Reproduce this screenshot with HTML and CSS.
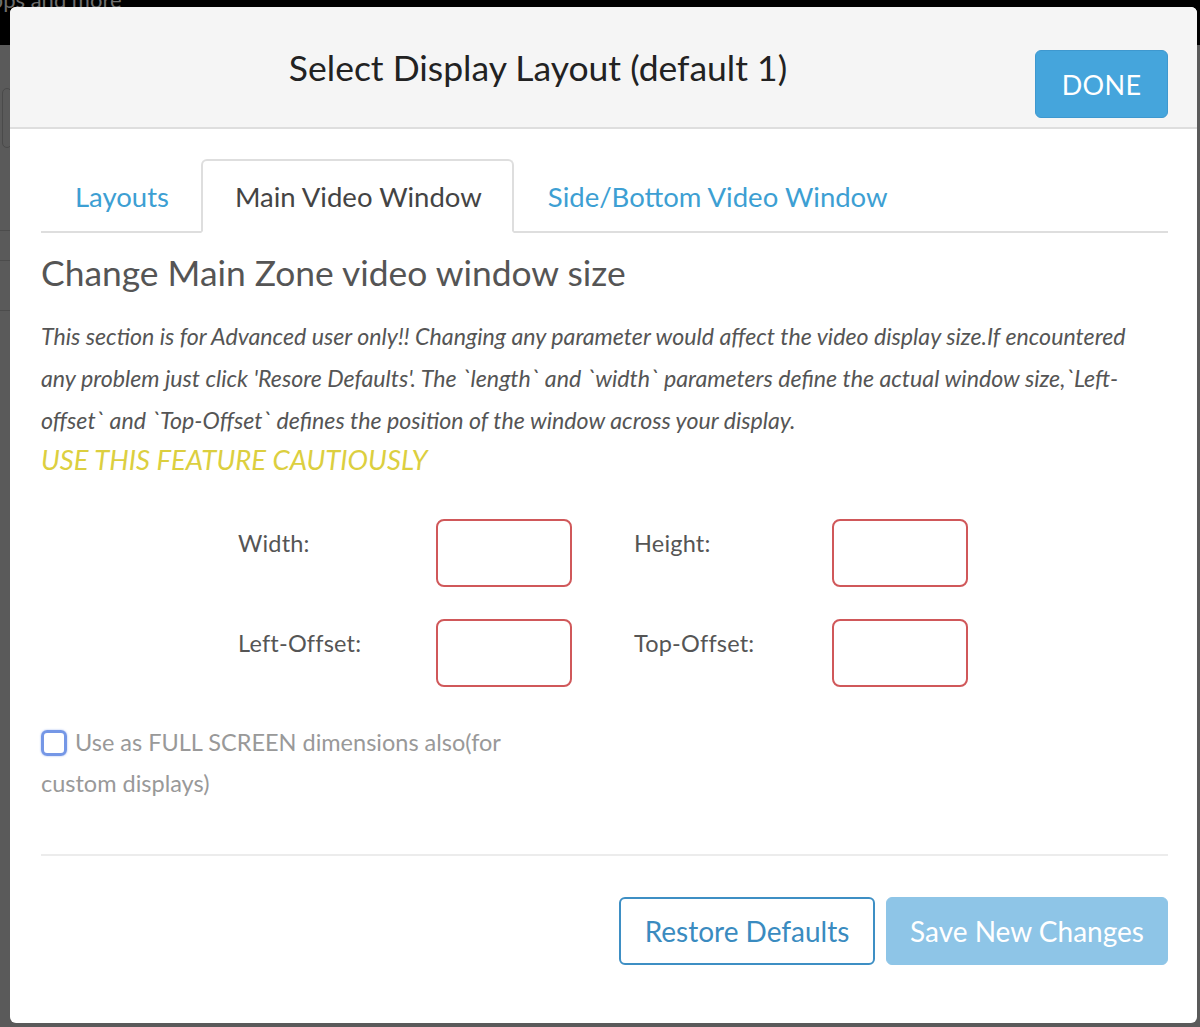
FILE: index.html
```html
<!DOCTYPE html>
<html lang="en">
<head>
<meta charset="utf-8">
<title>Select Display Layout</title>
<link rel="stylesheet" href="styles.css">
</head>
<body>
  <div class="page">
    <div class="page-top"><span class="page-tagline">Apps and more</span></div>
    <div class="page-body">
      <div class="ghost-pill"></div>
      <div class="ghost-line l1"></div>
      <div class="ghost-line l2"></div>
      <div class="ghost-line l3"></div>
    </div>
  </div>

  <div class="modal">
    <div class="modal-header">
      <h2 class="modal-title">Select Display Layout (default 1)</h2>
      <button class="btn btn-done" type="button">DONE</button>
    </div>

    <div class="modal-body">
      <ul class="tabs">
        <li class="tab"><a href="#">Layouts</a></li>
        <li class="tab active"><a href="#">Main Video Window</a></li>
        <li class="tab"><a href="#">Side/Bottom Video Window</a></li>
      </ul>

      <h3 class="section-title">Change Main Zone video window size</h3>
      <p class="notice">This section is for Advanced user only!! Changing any parameter would affect the video display size.If encountered any problem just click 'Resore Defaults'. The `length` and `width` parameters define the actual window size,`Left-offset` and `Top-Offset` defines the position of the window across your display.</p>
      <p class="caution">USE THIS FEATURE CAUTIOUSLY</p>

      <div class="dims">
        <label class="dim-label">Width:</label>
        <div class="dim-cell"><input class="dim-input" type="text"></div>
        <label class="dim-label">Height:</label>
        <div class="dim-cell"><input class="dim-input" type="text"></div>
        <label class="dim-label">Left-Offset:</label>
        <div class="dim-cell"><input class="dim-input" type="text"></div>
        <label class="dim-label">Top-Offset:</label>
        <div class="dim-cell"><input class="dim-input" type="text"></div>
      </div>

      <label class="fullscreen">
        <span class="check"></span>Use as FULL SCREEN dimensions also(for custom displays)
      </label>

      <hr class="divider">

      <div class="actions">
        <button class="btn btn-outline" type="button">Restore Defaults</button>
        <button class="btn btn-save" type="button">Save New Changes</button>
      </div>
    </div>
  </div>
</body>
</html>
```

FILE: styles.css
```css
* { box-sizing: border-box; }

html, body {
  margin: 0;
  height: 100%;
  overflow: hidden;
}

body {
  font-family: Lato, "Open Sans", "Liberation Sans", sans-serif;
  background: #595959;
  position: relative;
}

/* dimmed page behind the dialog */
.page {
  height: 100%;
  display: flex;
  flex-direction: column;
}

.page-top {
  height: 45px;
  background: #000;
  position: relative;
}

.page-tagline {
  position: absolute;
  left: -24px;
  top: -14px;
  color: #6e6e6e;
  font-size: 22px;
}

.page-body {
  flex: 1;
  background: #5a5a5a;
  position: relative;
}

.ghost-pill {
  position: absolute;
  left: 2px;
  top: 43px;
  width: 10px;
  height: 60px;
  border: 1px solid #4a4a4a;
  border-radius: 5px;
}

.ghost-line {
  position: absolute;
  left: 0;
  width: 12px;
  height: 1px;
  background: #4c4c4c;
}
.ghost-line.l1 { top: 185px; }
.ghost-line.l2 { top: 215px; }
.ghost-line.l3 { top: 265px; }

/* dialog */
.modal {
  position: absolute;
  left: 10px;
  top: 7px;
  width: 1187px;
  height: 1016px;
  background: #fff;
  border-radius: 6px;
  overflow: hidden;
}

.modal-header {
  height: 122px;
  background: #f5f5f5;
  border-bottom: 2px solid #dedede;
  display: flex;
  align-items: center;
  padding: 0 29px 0 31px;
}

.modal-title {
  flex: 1;
  margin: 0;
  text-align: center;
  font-weight: 400;
  font-size: 35.5px;
  color: #222;
}

.btn {
  font-family: inherit;
  border-radius: 6px;
  cursor: pointer;
  height: 68px;
  font-size: 28px;
  line-height: 1;
}

.btn-done {
  width: 133px;
  margin-top: 34px;
  background: #45a5dc;
  border: 1px solid #3e98cf;
  color: #fff;
  font-size: 27px;
  letter-spacing: 0.3px;
}

.modal-body {
  padding: 30px 29px 0 31px;
}

/* tabs */
.tabs {
  list-style: none;
  margin: 0;
  padding: 0;
  display: flex;
  border-bottom: 2px solid #dedede;
  height: 74px;
}

.tab {
  margin-bottom: -2px;
}

.tab a {
  display: block;
  height: 74px;
  padding: 19px 30px 0 32px;
  font-size: 27.5px;
  color: #3d9fd3;
  text-decoration: none;
  border: 2px solid transparent;
  border-radius: 6px 6px 0 0;
}

.tab.active a {
  color: #444;
  border-color: #dedede;
  border-bottom-color: #fff;
  background: #fff;
}

.section-title {
  margin: 20px 0 0;
  font-weight: 400;
  font-size: 35.4px;
  color: #555;
  line-height: 40px;
}

.notice {
  margin: 22px 0 0;
  font-style: italic;
  font-size: 23.2px;
  line-height: 42px;
  color: #555;
  padding-right: 30px;
}

.caution {
  margin: 0;
  font-style: italic;
  font-size: 27.5px;
  line-height: 38px;
  color: #dccf3f;
}

/* dimension fields */
.dims {
  display: grid;
  grid-template-columns: repeat(4, 198px);
  row-gap: 32px;
  margin: 40px 0 0 197px;
}

.dim-label {
  font-size: 23.5px;
  color: #555;
  padding-top: 10px;
  letter-spacing: 0.2px;
}

.dim-input {
  display: block;
  width: 136px;
  height: 68px;
  border: 2px solid #d0585a;
  border-radius: 8px;
  background: #fff;
  font-family: inherit;
  font-size: 20px;
}

/* full screen option */
.fullscreen {
  display: block;
  width: 480px;
  margin-top: 35px;
  font-size: 23.5px;
  line-height: 41px;
  color: #999;
}

.check {
  display: inline-block;
  width: 26px;
  height: 26px;
  border: 3px solid #7597e6;
  border-radius: 6px;
  vertical-align: -5px;
  margin-right: 8px;
  box-shadow: 0 0 2px rgba(90, 130, 230, 0.6);
}

.divider {
  margin: 50px 0 0;
  border: 0;
  border-top: 2px solid #ececec;
}

.actions {
  display: flex;
  justify-content: flex-end;
  gap: 11px;
  margin-top: 41px;
}

.btn-outline {
  width: 256px;
  background: #fff;
  border: 2px solid #3e8fc4;
  color: #3a8bc0;
}

.btn-save {
  width: 282px;
  background: #8ec5e7;
  border: 1px solid #8ec5e7;
  color: #fff;
}
```
